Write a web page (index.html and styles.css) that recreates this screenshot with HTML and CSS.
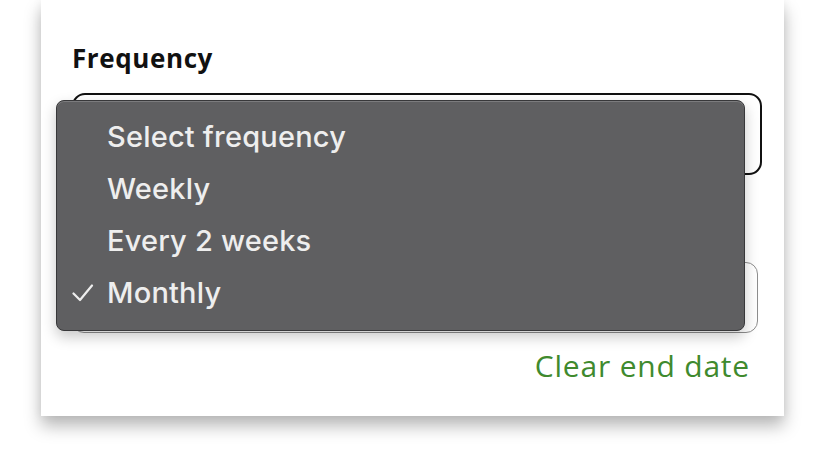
FILE: index.html
```html
<!DOCTYPE html>
<html lang="en">
<head>
<meta charset="utf-8">
<title>Frequency</title>
<link rel="stylesheet" href="styles.css">
</head>
<body>
<div class="stage">
  <div class="card">
    <div class="label">Frequency</div>
    <div class="select"></div>
    <div class="field"></div>
    <div class="link-row"><span class="link">Clear end date</span></div>

    <div class="menu">
      <div class="item"><span class="check"></span><span>Select frequency</span></div>
      <div class="item"><span class="check"></span><span>Weekly</span></div>
      <div class="item"><span class="check"></span><span>Every 2 weeks</span></div>
      <div class="item"><span class="check"><svg width="22" height="22" viewBox="0 0 22 22"><polyline points="1.5,10.5 8,17 20,2.5" fill="none" stroke="#eeeeee" stroke-width="2.2" stroke-linecap="round" stroke-linejoin="round"/></svg></span><span>Monthly</span></div>
    </div>
  </div>
</div>
</body>
</html>
```
FILE: styles.css
```css
* { box-sizing: border-box; }
html, body { margin: 0; padding: 0; background: #ffffff; }
body { width: 826px; height: 456px; overflow: hidden; }

.stage {
  padding-left: 41px;
}

.card {
  position: relative;
  width: 743px;
  height: 416px;
  background: #ffffff;
  box-shadow: 0 10px 16px rgba(0, 0, 0, 0.28), 0 0 10px rgba(0, 0, 0, 0.06);
  padding: 45px 0 0 31px;
  display: flex;
  flex-direction: column;
}

.label {
  font-family: "Open Sans", Lato, sans-serif;
  font-weight: 700;
  font-size: 26px;
  line-height: 26px;
  letter-spacing: 0.6px;
  color: #111111;
}

.select {
  margin-top: 22px;
  width: 690px;
  height: 82px;
  border: 2.5px solid #111111;
  border-radius: 13px;
}

.field {
  margin-top: 87px;
  width: 686px;
  height: 71px;
  border: 1.5px solid #8e8e8e;
  border-radius: 12px;
}

.link-row {
  margin-top: 14px;
  padding-right: 34px;
  text-align: right;
  font-family: "Open Sans", Lato, sans-serif;
  font-size: 30px;
  line-height: 38px;
  letter-spacing: 0.8px;
}

.link {
  color: #3f8a2e;
}

.menu {
  position: absolute;
  left: 15px;
  top: 100px;
  width: 689px;
  height: 231px;
  background: #5f5f61;
  border: 1px solid #38383a;
  border-radius: 8px;
  box-shadow: inset 0 1px 0 rgba(255, 255, 255, 0.18), 0 6px 14px rgba(0, 0, 0, 0.22);
  padding-top: 9px;
  display: flex;
  flex-direction: column;
}

.item {
  display: flex;
  align-items: center;
  height: 52px;
  font-family: Inter, "Noto Sans", sans-serif;
  font-size: 29px;
  font-weight: 500;
  letter-spacing: 0.2px;
  color: #eeeeee;
}

.check {
  width: 50px;
  flex: none;
  padding-left: 15px;
  display: flex;
  align-items: center;
}
.check svg { display: block; margin-top: 4px; }
```
